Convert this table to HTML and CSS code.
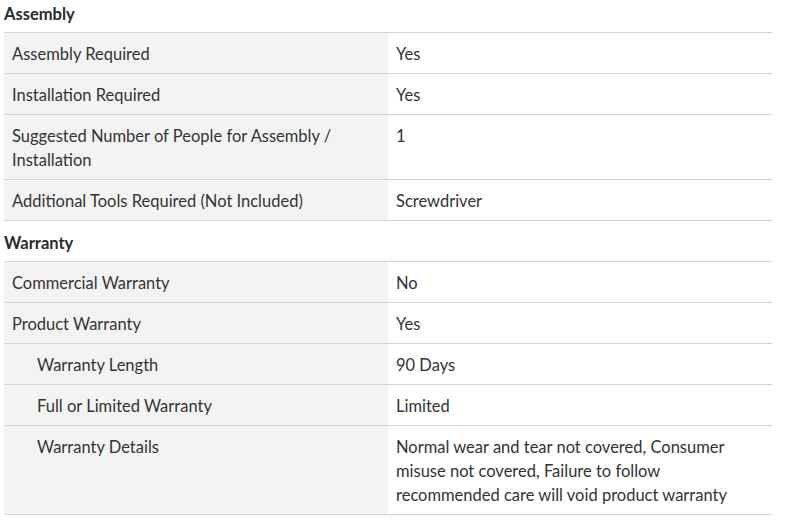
FILE: index.html
```html
<!DOCTYPE html>
<html>
<head>
<meta charset="utf-8">
<link rel="stylesheet" href="styles.css">
</head>
<body>
<div class="specs">
  <h3 class="group">Assembly</h3>
  <div class="table">
    <div class="row"><div class="key">Assembly Required</div><div class="val">Yes</div></div>
    <div class="row"><div class="key">Installation Required</div><div class="val">Yes</div></div>
    <div class="row"><div class="key">Suggested Number of People for Assembly / Installation</div><div class="val">1</div></div>
    <div class="row"><div class="key">Additional Tools Required (Not Included)</div><div class="val">Screwdriver</div></div>
  </div>
  <h3 class="group">Warranty</h3>
  <div class="table">
    <div class="row"><div class="key">Commercial Warranty</div><div class="val">No</div></div>
    <div class="row"><div class="key">Product Warranty</div><div class="val">Yes</div></div>
    <div class="row"><div class="key sub">Warranty Length</div><div class="val">90 Days</div></div>
    <div class="row"><div class="key sub">Full or Limited Warranty</div><div class="val">Limited</div></div>
    <div class="row"><div class="key sub">Warranty Details</div><div class="val">Normal wear and tear not covered, Consumer misuse not covered, Failure to follow recommended care will void product warranty</div></div>
  </div>
</div>
</body>
</html>
```
FILE: styles.css
```css
html, body {
  margin: 0;
  padding: 0;
  background: #fff;
}
body {
  font-family: Lato, "Open Sans", sans-serif;
  font-size: 16.5px;
  line-height: 24px;
  color: #333;
}
.specs {
  width: 768px;
  margin: -8px 0 0 4px;
}
.group {
  margin: 0;
  height: 40px;
  box-sizing: border-box;
  padding-top: 3px;
  display: flex;
  align-items: center;
  font-size: 16.5px;
  font-weight: 700;
  color: #2b2b2b;
}
.table {
  border-top: 1px solid #d3d3d3;
}
.row {
  display: grid;
  grid-template-columns: 384px 384px;
  border-bottom: 1px solid #d3d3d3;
}
.key {
  background: #f3f3f3;
  padding: 9px 8px 7px;
}
.key.sub {
  padding-left: 33px;
}
.val {
  padding: 9px 40px 7px 8px;
}
```
